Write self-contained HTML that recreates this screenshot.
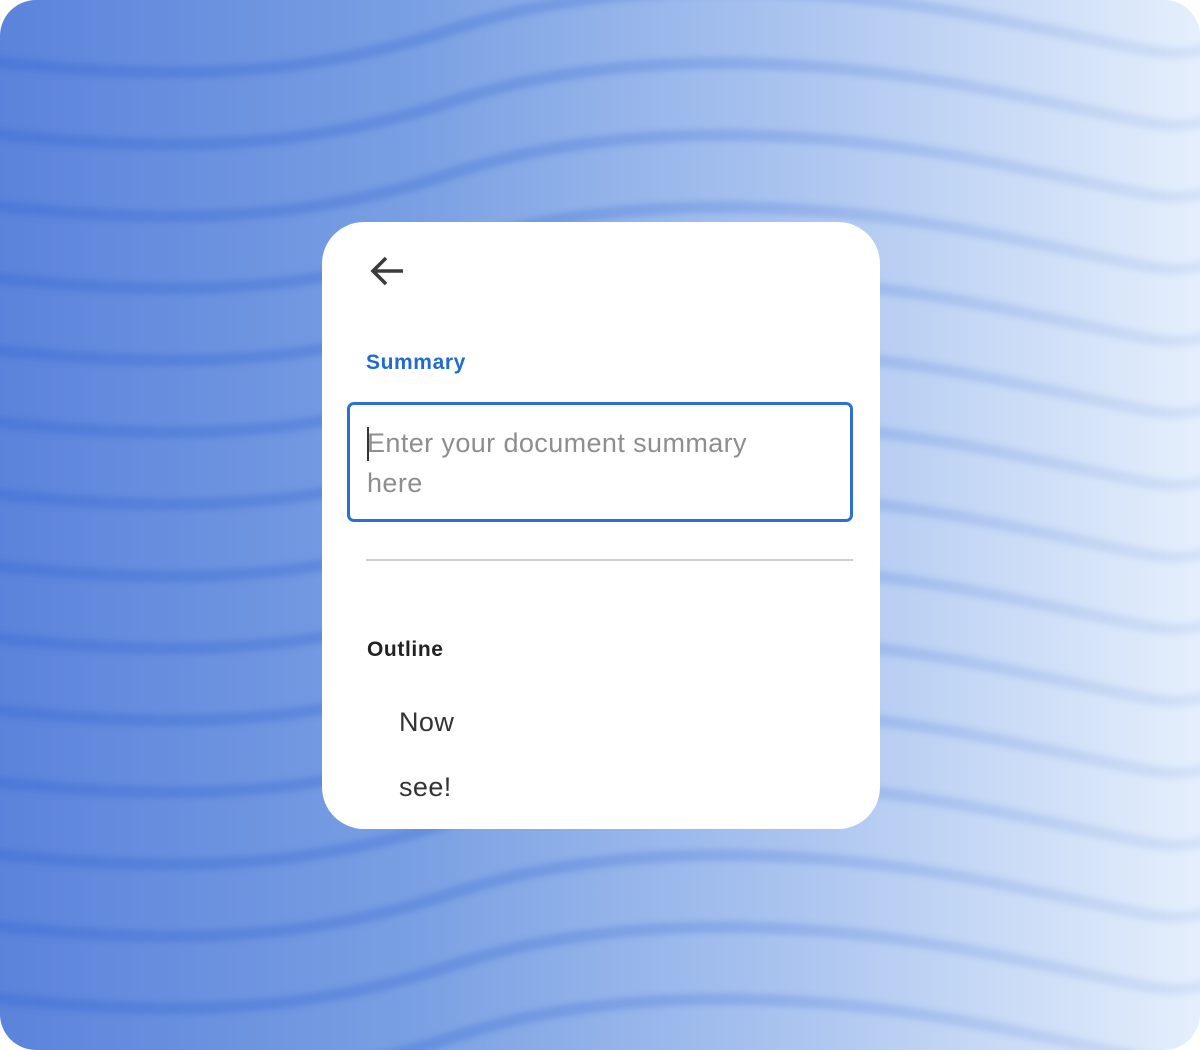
<!DOCTYPE html>
<html><head><style>
html,body{margin:0;padding:0;background:#fff;}
.bg{position:absolute;left:0;top:0;width:1200px;height:1050px;border-radius:36px;overflow:hidden;background:linear-gradient(90deg,#5b83db 0%,#7aa0e3 35%,#a9c3ef 65%,#e5effc 100%);}
.card{position:absolute;left:322px;top:222px;width:558px;height:607px;background:#fff;border-radius:42px;font-family:"Liberation Sans",sans-serif;}
.sum{position:absolute;left:44px;top:129px;font-size:21px;font-weight:bold;color:#1f6bcf;letter-spacing:0.6px;}
.box{position:absolute;left:25px;top:180px;width:500px;height:114px;border:3px solid #2a70d8;border-radius:7px;}
.ph{position:absolute;left:17px;top:18px;font-size:27px;line-height:40px;color:#8e8e8e;width:420px;letter-spacing:0.4px;}
.caret{position:absolute;left:17px;top:22px;width:2px;height:34px;background:#333;}
.hr{position:absolute;left:44px;top:337px;width:487px;height:2px;background:#cfcfcf;}
.out{position:absolute;left:45px;top:416px;font-size:21px;font-weight:bold;color:#222;letter-spacing:0.6px;}
.item{position:absolute;left:77px;font-size:27px;color:#333;letter-spacing:0.4px;}
</style></head><body>
<div class="bg">
<svg width="1200" height="1050" style="position:absolute;left:0;top:0">
<defs>
<filter id="b"><feGaussianBlur stdDeviation="3"/></filter>
<linearGradient id="g" x1="0" x2="1" y1="0" y2="0"><stop offset="0" stop-color="#3f6fd6" stop-opacity="0.5"/><stop offset="1" stop-color="#3f6fd6" stop-opacity="0.08"/></linearGradient>
</defs>
<g fill="none" stroke="url(#g)" stroke-width="12" filter="url(#b)">
<path id="w" d="M-20 60 C 150 80, 300 80, 450 30 S 800 -20, 1000 20 S 1150 60, 1250 40"/>
<use href="#w" y="72"/><use href="#w" y="144"/><use href="#w" y="216"/><use href="#w" y="288"/>
<use href="#w" y="360"/><use href="#w" y="432"/><use href="#w" y="504"/><use href="#w" y="576"/>
<use href="#w" y="648"/><use href="#w" y="720"/><use href="#w" y="792"/><use href="#w" y="864"/>
<use href="#w" y="936"/><use href="#w" y="1008"/>
</g>
</svg>
</div>
<div class="card">
<svg style="position:absolute;left:46px;top:32px" width="36" height="34" viewBox="0 0 36 34"><path d="M35 17H5M18 4L5 17L18 30" fill="none" stroke="#3c3c3c" stroke-width="3.6"/></svg>
<div class="sum">Summary</div>
<div class="box"><div class="caret"></div><div class="ph">Enter your document summary here</div></div>
<div class="hr"></div>
<div class="out">Outline</div>
<div class="item" style="top:485px">Now</div>
<div class="item" style="top:550px">see!</div>
</div>
</body></html>
